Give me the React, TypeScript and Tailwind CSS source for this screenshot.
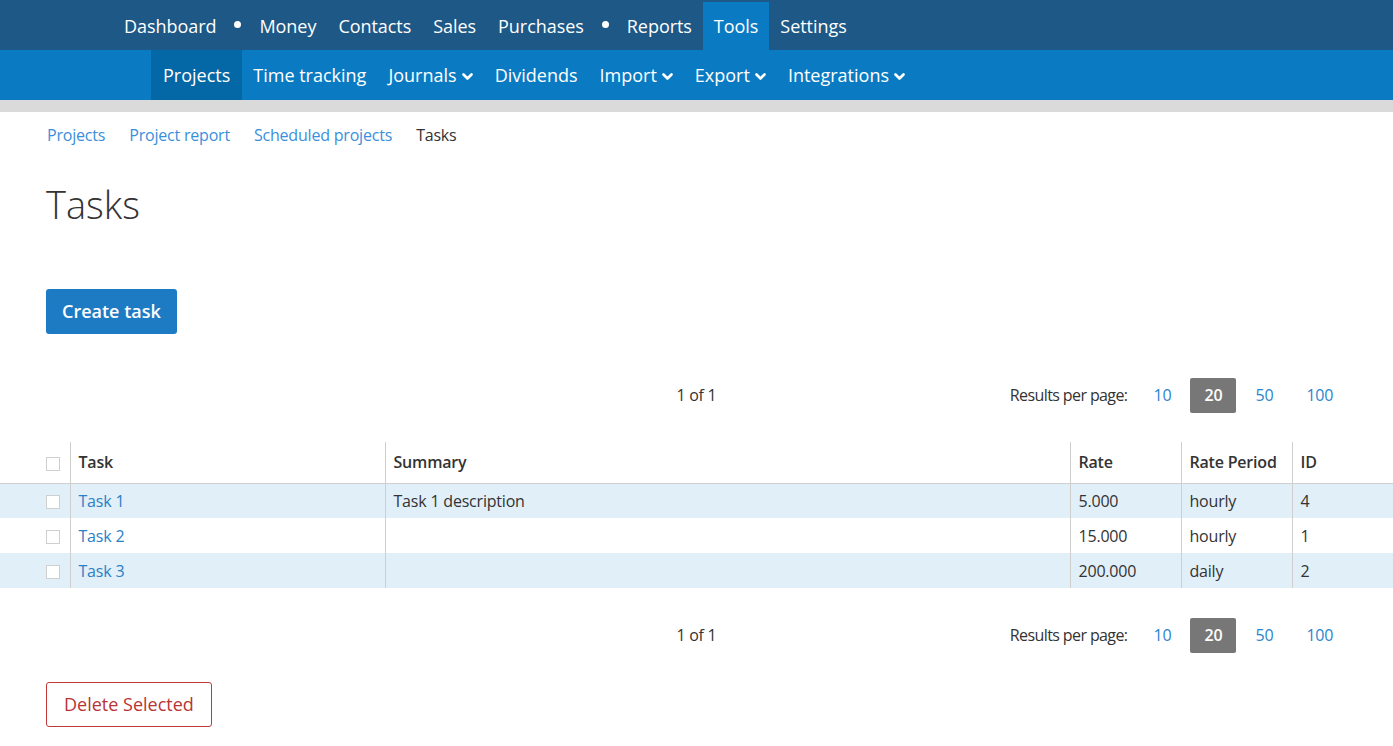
import React from 'react';

const topItems = ['Dashboard', '•', 'Money', 'Contacts', 'Sales', 'Purchases', '•', 'Reports', 'Tools', 'Settings'];
const subItems = [
  { label: 'Projects', active: true },
  { label: 'Time tracking' },
  { label: 'Journals', menu: true },
  { label: 'Dividends' },
  { label: 'Import', menu: true },
  { label: 'Export', menu: true },
  { label: 'Integrations', menu: true },
];

const tasks = [
  { name: 'Task 1', summary: 'Task 1 description', rate: '5.000', period: 'hourly', id: '4' },
  { name: 'Task 2', summary: '', rate: '15.000', period: 'hourly', id: '1' },
  { name: 'Task 3', summary: '', rate: '200.000', period: 'daily', id: '2' },
];

function Chevron() {
  return (
    <svg width="11" height="8" viewBox="0 0 11 8" className="ml-[5px] mt-[3px]">
      <path d="M1.5 1.5 L5.5 5.5 L9.5 1.5" fill="none" stroke="white" strokeWidth="2.6" strokeLinecap="round" strokeLinejoin="round" />
    </svg>
  );
}

function Box() {
  return <span className="inline-block w-[14px] h-[14px] border border-[#cfcfcf] bg-white align-middle" />;
}

function Pager() {
  return (
    <div className="grid grid-cols-[1fr_auto_1fr] items-center h-[36px] text-[16px] text-[#333] tracking-[-0.3px]">
      <div />
      <div>1 of 1</div>
      <div className="flex items-center justify-end pr-[46px] gap-[5px]">
        <span className="mr-[7px] tracking-[-0.6px]">Results per page:</span>
        <span className="min-w-[46px] px-[14px] h-[35px] flex items-center justify-center text-[#2b85cf]">10</span>
        <span className="min-w-[46px] px-[14px] h-[35px] flex items-center justify-center bg-[#777] text-white font-semibold rounded-[2px]">20</span>
        <span className="min-w-[46px] px-[14px] h-[35px] flex items-center justify-center text-[#2b85cf]">50</span>
        <span className="min-w-[46px] px-[14px] h-[35px] flex items-center justify-center text-[#2b85cf]">100</span>
      </div>
    </div>
  );
}

export default function App() {
  return (
    <div className="min-h-screen bg-white text-[#333]" style={{ fontFamily: '"Open Sans", "Noto Sans", sans-serif' }}>
      {/* main nav */}
      <div className="h-[50px] bg-[#1d5886] flex items-end pl-[113px]">
        {topItems.map((t, i) =>
          t === '•' ? (
            <div key={i} className="w-[21px] h-[48px] flex items-center justify-center">
              <span className="w-[7px] h-[7px] rounded-full bg-white -mt-[3px]" />
            </div>
          ) : (
            <div
              key={i}
              className={`h-[48px] px-[11px] flex items-center text-white text-[18px] tracking-[-0.05px] ${t === 'Tools' ? 'bg-[#0a7bc2]' : ''}`}
            >
              <span>{t}</span>
            </div>
          )
        )}
      </div>
      {/* sub nav */}
      <div className="h-[50px] bg-[#0a7bc2] flex pl-[151px]">
        {subItems.map((s) => (
          <div
            key={s.label}
            className={`h-[50px] flex items-center text-white text-[18px] ${s.active ? 'bg-[#0568a6] px-[12px]' : 'px-[11px]'}`}
          >
            <span>{s.label}</span>
            {s.menu && <Chevron />}
          </div>
        ))}
      </div>
      <div className="h-[12px] bg-[#dadada]" />

      <div className="pl-[47px] pt-[11px] flex gap-[24px] text-[16px] tracking-[-0.2px]">
        <a className="text-[#3a8fdc]">Projects</a>
        <a className="text-[#3a8fdc]">Project report</a>
        <a className="text-[#3a8fdc]">Scheduled projects</a>
        <span className="text-[#333]">Tasks</span>
      </div>

      <h1 className="pl-[46px] mt-[33px] text-[38px] font-light leading-[48px] text-[#333]">Tasks</h1>

      <div className="pl-[46px] mt-[61px]">
        <button className="h-[45px] px-[16px] bg-[#1d7bc4] text-white text-[18px] font-semibold rounded-[3px]">Create task</button>
      </div>

      <div className="mt-[43px]">
        <Pager />
      </div>

      <table className="w-full mt-[29px] text-[16px] border-collapse tracking-[-0.2px]">
        <thead>
          <tr className="h-[41px] border-b border-[#cfcfcf]">
            <th className="w-[70px] pl-[46px] text-left align-middle"><Box /></th>
            <th className="w-[315px] px-[8px] text-left font-semibold border-l border-[#cfcfcf]">Task</th>
            <th className="px-[8px] text-left font-semibold border-l border-[#cfcfcf]">Summary</th>
            <th className="w-[111px] px-[8px] text-left font-semibold border-l border-[#cfcfcf]">Rate</th>
            <th className="w-[111px] px-[8px] text-left font-semibold border-l border-[#cfcfcf]">Rate Period</th>
            <th className="w-[101px] px-[8px] text-left font-semibold border-l border-[#cfcfcf]">ID</th>
          </tr>
        </thead>
        <tbody>
          {tasks.map((t, i) => (
            <tr key={t.id} className={`h-[35px] ${i % 2 === 0 ? 'bg-[#e1eff9]' : 'bg-white'}`}>
              <td className="pl-[46px]"><Box /></td>
              <td className="px-[8px] border-l border-[#cfcfcf] text-[#2b7fc6]">{t.name}</td>
              <td className="px-[8px] border-l border-[#cfcfcf]">{t.summary}</td>
              <td className="px-[8px] border-l border-[#cfcfcf]">{t.rate}</td>
              <td className="px-[8px] border-l border-[#cfcfcf]">{t.period}</td>
              <td className="px-[8px] border-l border-[#cfcfcf]">{t.id}</td>
            </tr>
          ))}
        </tbody>
      </table>

      <div className="mt-[29px]">
        <Pager />
      </div>

      <div className="pl-[46px] mt-[29px] pb-[20px]">
        <button className="h-[45px] px-[17px] border border-[#c0393b] text-[#b83436] text-[18px] font-medium rounded-[3px] bg-white">Delete Selected</button>
      </div>
    </div>
  );
}
